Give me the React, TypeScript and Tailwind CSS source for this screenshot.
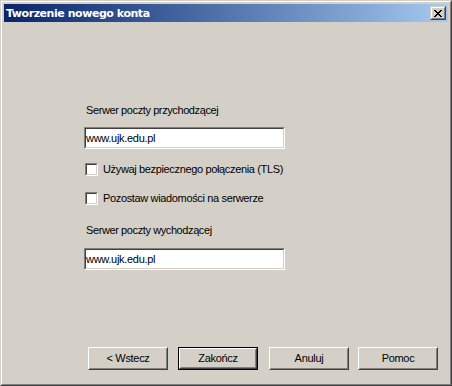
import React from "react";

function Btn({ label, def = false, className = "" }: { label: string; def?: boolean; className?: string }) {
  const face = (
    <div className="w-full h-full border border-t-white border-l-white border-r-[#404040] border-b-[#404040]">
      <div className="w-full h-full border border-t-[#d4d0c8] border-l-[#d4d0c8] border-r-[#808080] border-b-[#808080] flex items-center justify-center text-[11px] leading-[13px] tracking-[-0.3px] text-black">
        {label}
      </div>
    </div>
  );
  return <div className={"w-[80px] h-[23px] " + (def ? "border border-black " : "") + className}>{face}</div>;
}

function Check({ label, className = "" }: { label: string; className?: string }) {
  return (
    <div className={"flex items-center h-[13px] w-[201px] overflow-hidden " + className}>
      <div className="w-[13px] h-[13px] border border-t-[#808080] border-l-[#808080] border-r-white border-b-white shrink-0">
        <div className="w-full h-full border border-t-[#404040] border-l-[#404040] border-r-[#d4d0c8] border-b-[#d4d0c8] bg-white" />
      </div>
      <span className="ml-[5px] text-[11px] leading-[13px] tracking-[-0.35px] text-black whitespace-nowrap">{label}</span>
    </div>
  );
}

function Input({ value, className = "" }: { value: string; className?: string }) {
  return (
    <div className={"w-[201px] h-[22px] border border-t-[#808080] border-l-[#808080] border-r-white border-b-white " + className}>
      <div className="w-full h-full border border-t-[#404040] border-l-[#404040] border-r-[#d4d0c8] border-b-[#d4d0c8] bg-white flex items-center text-[11px] leading-[13px] tracking-[-0.3px] text-black">
        {value}
      </div>
    </div>
  );
}

export default function App() {
  return (
    <div
      className="w-[452px] h-[386px] bg-[#d4d0c8] border border-t-[#d4d0c8] border-l-[#d4d0c8] border-r-[#404040] border-b-[#404040]"
      style={{ fontFamily: '"Liberation Sans", Arial, sans-serif' }}
    >
      <div className="w-full h-full border border-t-white border-l-white border-r-[#808080] border-b-[#808080] p-[2px] flex flex-col">
        <div className="h-[18px] bg-gradient-to-r from-[#0a246a] to-[#a6caf0] flex items-center justify-between pl-[2px] pr-[2px]">
          <span
            className="text-white font-bold text-[11px] leading-[13px] tracking-[-0.45px] whitespace-nowrap"
            style={{ fontFamily: '"DejaVu Sans", sans-serif' }}
          >
            Tworzenie nowego konta
          </span>
          <div className="w-[16px] h-[14px] border border-t-[#d4d0c8] border-l-[#d4d0c8] border-r-[#404040] border-b-[#404040] bg-[#d4d0c8]">
            <div className="w-full h-full border border-t-white border-l-white border-r-[#808080] border-b-[#808080] flex items-center justify-center">
              <svg width="8" height="7" viewBox="0 0 8 7" shapeRendering="crispEdges">
                <g fill="#000">
                  <rect x="0" y="0" width="2" height="1" />
                  <rect x="6" y="0" width="2" height="1" />
                  <rect x="1" y="1" width="2" height="1" />
                  <rect x="5" y="1" width="2" height="1" />
                  <rect x="2" y="2" width="4" height="1" />
                  <rect x="3" y="3" width="2" height="1" />
                  <rect x="2" y="4" width="4" height="1" />
                  <rect x="1" y="5" width="2" height="1" />
                  <rect x="5" y="5" width="2" height="1" />
                  <rect x="0" y="6" width="2" height="1" />
                  <rect x="6" y="6" width="2" height="1" />
                </g>
              </svg>
            </div>
          </div>
        </div>
        <div className="flex flex-col pl-[80px]">
          <div className="mt-[82px] h-[13px] pl-[2px] text-[11px] leading-[13px] tracking-[-0.4px] text-black">Serwer poczty przychodzącej</div>
          <Input value="www.ujk.edu.pl" className="mt-[10px]" />
          <Check label="Używaj bezpiecznego połączenia (TLS)" className="mt-[14px] ml-[1px]" />
          <Check label="Pozostaw wiadomości na serwerze" className="mt-[16px] ml-[1px]" />
          <div className="mt-[19px] h-[13px] pl-[2px] text-[11px] leading-[13px] tracking-[-0.4px] text-black">Serwer poczty wychodzącej</div>
          <Input value="www.ujk.edu.pl" className="mt-[11px]" />
          <div className="flex mt-[77px] pl-[4px]">
            <Btn label="< Wstecz" />
            <Btn label="Zakończ" def className="ml-[10px]" />
            <Btn label="Anuluj" className="ml-[11px]" />
            <Btn label="Pomoc" className="ml-[9px]" />
          </div>
        </div>
      </div>
    </div>
  );
}
